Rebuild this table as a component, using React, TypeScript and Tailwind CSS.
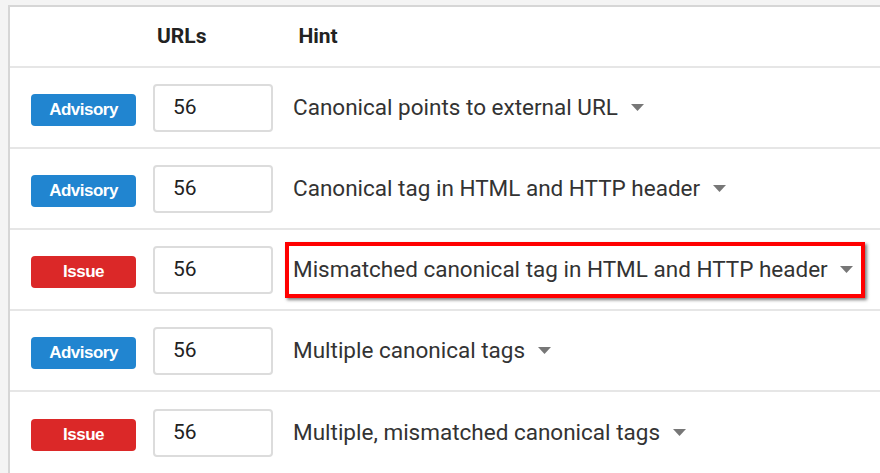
const ROWS = [
  { kind: "Advisory", count: 56, hint: "Canonical points to external URL" },
  { kind: "Advisory", count: 56, hint: "Canonical tag in HTML and HTTP header" },
  { kind: "Issue", count: 56, hint: "Mismatched canonical tag in HTML and HTTP header", marked: true },
  { kind: "Advisory", count: 56, hint: "Multiple canonical tags" },
  { kind: "Issue", count: 56, hint: "Multiple, mismatched canonical tags" },
];

function Caret() {
  return (
    <svg width="13" height="7" viewBox="0 0 13 7" className="shrink-0">
      <path d="M0 0h13L6.5 7z" fill="#777" />
    </svg>
  );
}

export default function App() {
  return (
    <div className="h-[473px] w-[880px] overflow-hidden bg-[#f4f4f4] pl-2 pt-[5px] font-['Roboto',sans-serif]">
      <div className="w-[900px] border-2 border-[#d6d6d6] bg-white">
        {/* header */}
        <div className="flex h-[61px] items-center border-b-2 border-[#e6e6e6] text-[21px] font-bold text-[#222]">
          <span className="ml-[147px]">URLs</span>
          <span className="ml-[92px]">Hint</span>
        </div>

        {ROWS.map((r, i) => (
          <div
            key={i}
            className={`flex h-[81px] items-center pl-[21px] ${i < ROWS.length - 1 ? "border-b-2 border-[#e6e6e6]" : ""}`}
          >
            <span
              className={`mt-[4px] flex h-[32px] w-[105px] items-center justify-center rounded-[4px] font-['Liberation_Sans',sans-serif] text-[17px] font-bold tracking-[-0.5px] text-white ${
                r.kind === "Issue" ? "bg-[#db2828]" : "bg-[#2185d0]"
              }`}
            >
              {r.kind}
            </span>
            <div className="ml-[17px] flex h-[48px] w-[120px] items-center rounded-[4px] border-2 border-[#dcdcdc] pl-[18px] text-[21px] text-[#222]">
              {r.count}
            </div>
            {r.marked ? (
              <div className="ml-[12px] flex h-[56px] items-center gap-[12px] border-4 border-[#f00] pl-[4px] pr-[8px] text-[22.5px] text-[#333] shadow-[2px_2px_3px_rgba(0,0,0,0.5)]">
                {r.hint}
                <Caret />
              </div>
            ) : (
              <div className="ml-[20px] flex items-center gap-[13px] text-[22.5px] text-[#333]">
                {r.hint}
                <Caret />
              </div>
            )}
          </div>
        ))}
      </div>
    </div>
  );
}
